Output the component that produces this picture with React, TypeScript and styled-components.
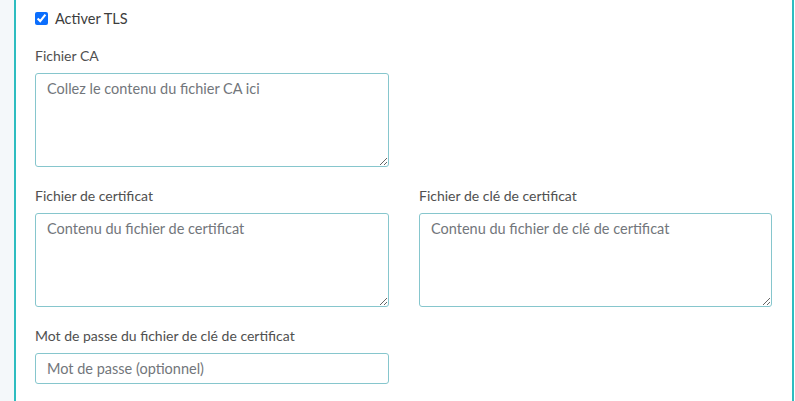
import React from 'react';
import styled, { createGlobalStyle } from 'styled-components';

const GlobalStyle = createGlobalStyle`
  html, body {
    margin: 0;
    padding: 0;
    background: #ffffff;
  }
  body {
    font-family: Lato, 'Open Sans', sans-serif;
  }
`;

const Page = styled.div`
  display: flex;
  min-height: 401px;
  width: 795px;
  overflow: hidden;
`;

const SideStrip = styled.div`
  width: 14px;
  flex-shrink: 0;
  background: #f4f8fa;
`;

const Card = styled.div`
  width: 780px;
  flex-shrink: 0;
  border-left: 2px solid #2ebdc0;
  border-right: 2px solid #2ebdc0;
  background: #ffffff;
  padding: 9px 20px 0 19px;
  box-sizing: border-box;
  min-height: 401px;
`;

const FormGrid = styled.div`
  display: grid;
  grid-template-columns: 354px 353px;
  column-gap: 30px;
  align-items: start;
`;

const FullRow = styled.div`
  grid-column: 1 / -1;
`;

const CheckRow = styled.label`
  display: flex;
  align-items: center;
  gap: 7px;
  font-size: 14.5px;
  color: #3d3d3d;
  height: 18px;
  margin-bottom: 19px;
`;

const Check = styled.input`
  width: 13px;
  height: 13px;
  margin: 0;
  accent-color: #0b6efd;
`;

const Group = styled.div<{ $last?: boolean }>`
  display: flex;
  flex-direction: column;
  margin-bottom: ${({ $last }) => ($last ? '0' : '19px')};
`;

const Label = styled.label`
  font-size: 14px;
  line-height: 20px;
  color: #505050;
  margin-bottom: 7px;
`;

const TextArea = styled.textarea`
  box-sizing: border-box;
  width: 100%;
  height: 94px;
  border: 1px solid #86c6cd;
  border-radius: 3px;
  padding: 5px 11px;
  font-family: inherit;
  font-size: 14.5px;
  line-height: 20px;
  color: #333;
  resize: vertical;
  &::placeholder {
    color: #72767b;
  }
`;

const TextInput = styled.input`
  box-sizing: border-box;
  width: 100%;
  height: 31px;
  border: 1px solid #86c6cd;
  border-radius: 3px;
  padding: 0 11px;
  font-family: inherit;
  font-size: 14.5px;
  color: #333;
  &::placeholder {
    color: #72767b;
  }
`;

export default function App() {
  return (
    <Page>
      <GlobalStyle />
      <SideStrip />
      <Card>
        <FormGrid>
          <FullRow>
            <CheckRow>
              <Check type="checkbox" defaultChecked />
              Activer TLS
            </CheckRow>
          </FullRow>
          <Group>
            <Label>Fichier CA</Label>
            <TextArea placeholder="Collez le contenu du fichier CA ici" />
          </Group>
          <div />
          <Group>
            <Label>Fichier de certificat</Label>
            <TextArea placeholder="Contenu du fichier de certificat" />
          </Group>
          <Group>
            <Label>Fichier de clé de certificat</Label>
            <TextArea placeholder="Contenu du fichier de clé de certificat" />
          </Group>
          <Group $last>
            <Label>Mot de passe du fichier de clé de certificat</Label>
            <TextInput placeholder="Mot de passe (optionnel)" />
          </Group>
        </FormGrid>
      </Card>
    </Page>
  );
}
